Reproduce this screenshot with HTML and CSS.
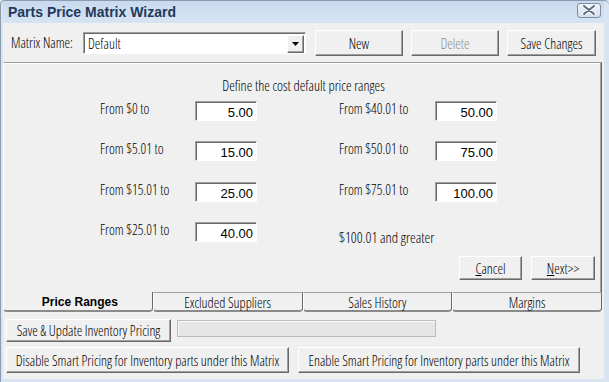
FILE: index.html
```
<!DOCTYPE html>
<html>
<head>
    <link rel="stylesheet" href="styles.css">
</head>
<body>
<div class="window">
    <div class="titlebar">
        <span class="title">Parts Price Matrix Wizard</span>
        <span class="close">
            <svg width="14" height="10" viewBox="0 0 14 10">
                <path d="M2 1 L12 9 M12 1 L2 9" stroke="#fff" stroke-width="4" stroke-linecap="round"/>
                <path d="M2 1 L12 9 M12 1 L2 9" stroke="#5c6a7c" stroke-width="2" stroke-linecap="round"/>
            </svg>
        </span>
    </div>
    <div class="client">
        <div class="toprow">
            <span class="lbl">Matrix Name:</span>
            <div class="combo">
                <span class="combo-text">Default</span>
                <span class="drop">
                    <svg width="7" height="4" viewBox="0 0 7 4"><path d="M0 0 H7 L3.5 4 Z" fill="#000"/></svg>
                </span>
            </div>
            <button class="btn btn-top">New</button>
            <button class="btn btn-top disabled">Delete</button>
            <button class="btn btn-top btn-save">Save Changes</button>
        </div>

        <div class="panel">
            <div class="heading">Define the cost default price ranges</div>
            <div class="ranges">
                <span class="rlbl">From $0 to</span>
                <span class="field">5.00</span>
                <span></span>
                <span class="rlbl">From $40.01 to</span>
                <span class="field">50.00</span>

                <span class="rlbl">From $5.01 to</span>
                <span class="field">15.00</span>
                <span></span>
                <span class="rlbl">From $50.01 to</span>
                <span class="field">75.00</span>

                <span class="rlbl">From $15.01 to</span>
                <span class="field">25.00</span>
                <span></span>
                <span class="rlbl">From $75.01 to</span>
                <span class="field">100.00</span>

                <span class="rlbl">From $25.01 to</span>
                <span class="field">40.00</span>
                <span></span>
                <span class="rlbl last">$100.01 and greater</span>
                <span></span>
            </div>
            <div class="nav">
                <button class="btn btn-nav btn-cancel"><u>C</u>ancel</button>
                <button class="btn btn-nav"><u>N</u>ext&gt;&gt;</button>
            </div>
        </div>

        <div class="tabs">
            <div class="tab active">Price Ranges</div>
            <div class="tab">Excluded Suppliers</div>
            <div class="tab">Sales History</div>
            <div class="tab">Margins</div>
        </div>

        <div class="bottom">
            <div class="brow">
                <button class="btn btn-upd">Save &amp; Update Inventory Pricing</button>
                <div class="progress"></div>
            </div>
            <div class="brow brow-2">
                <button class="btn btn-smart">Disable Smart Pricing for Inventory parts under this Matrix</button>
                <button class="btn btn-smart btn-enable">Enable Smart Pricing for Inventory parts under this Matrix</button>
            </div>
        </div>
    </div>
</div>
</body>
</html>
```

FILE: styles.css
```
* {
    box-sizing: border-box;
}

body {
    margin: 0;
    background-color: #d8e4f2;
    font-family: "Open Sans", "Liberation Sans", Arial, sans-serif;
    font-stretch: 75%;
    font-weight: 300;
    font-size: 14px;
    color: #000;
    overflow: hidden;
}

.window {
    width: 609px;
    height: 382px;
    background-color: #d8e4f2;
    border-left: 1px solid #8b9bb0;
    border-top: 1px solid #8b9bb0;
    border-radius: 5px 5px 0 0;
    padding: 0 5px 3px 2px;
    display: flex;
    flex-direction: column;
}

.titlebar {
    height: 22px;
    display: flex;
    align-items: center;
    justify-content: space-between;
    padding: 0 3px 0 5px;
    background: linear-gradient(#c9daee, #d6e3f2);
}

.title {
    font-family: "Liberation Sans", Arial, sans-serif;
    font-stretch: normal;
    font-weight: bold;
    font-size: 14px;
    color: #22395a;
}

.close {
    width: 24px;
    height: 15px;
    margin-top: -4px;
    border: 1px solid #7d8ba0;
    border-radius: 3px;
    background: linear-gradient(#eef3f9, #d3deec);
    display: flex;
    align-items: center;
    justify-content: center;
}

.client {
    flex: 1;
    background-color: #f0f0f0;
    display: flex;
    flex-direction: column;
}

.toprow {
    display: flex;
    align-items: center;
    height: 26px;
    margin-top: 7px;
    padding-left: 8px;
}

.lbl {
    width: 72px;
    line-height: 16px;
}

.combo {
    width: 223px;
    height: 22px;
    background: #fff;
    border: 1px solid;
    border-color: #a0a0a0 #fff #fff #a0a0a0;
    box-shadow: inset 1px 1px #696969;
    display: flex;
    align-items: center;
    padding: 2px 1px 1px 4px;
    margin-right: 9px;
    line-height: 16px;
}

.combo-text {
    flex: 1;
}

.drop {
    width: 17px;
    height: 18px;
    background: #f0f0f0;
    border: 1px solid;
    border-color: #fff #696969 #696969 #fff;
    box-shadow: inset -1px -1px #a0a0a0;
    display: flex;
    align-items: center;
    justify-content: center;
}

.btn {
    font-family: inherit;
    font-stretch: 75%;
    font-weight: 300;
    font-size: 14px;
    color: #000;
    background-color: #f0f0f0;
    border: 1px solid;
    border-color: #fff #696969 #696969 #fff;
    box-shadow: inset -1px -1px #a0a0a0;
    padding: 0;
    border-radius: 0;
    white-space: nowrap;
}

.btn-top {
    width: 88px;
    height: 26px;
    margin-right: 8px;
}

.btn-save {
    width: 89px;
}

.disabled {
    color: #8d8d8d;
}

.panel {
    height: 230px;
    border-top: 1px solid #a0a0a0;
    border-left: 1px solid #fff;
    border-right: 1px solid #696969;
    box-shadow: inset -1px 0 #a0a0a0, inset 0 1px #fff;
    margin-top: 6px;
    margin-right: 2px;
    padding-top: 15px;
    display: flex;
    flex-direction: column;
}

.heading {
    text-align: center;
    font-size: 14.2px;
    line-height: 16px;
    padding-left: 2px;
}

.ranges {
    display: grid;
    grid-template-columns: 95px 62px 82px 96px 62px;
    grid-auto-rows: 20px;
    row-gap: 20.4px;
    margin-top: 7px;
    padding-left: 96px;
}

.rlbl {
    line-height: 15px;
    white-space: nowrap;
}

.rlbl.last {
    padding-top: 8px;
    font-size: 14.5px;
}

.field {
    background: #fff;
    border: 1px solid;
    border-color: #a0a0a0 #fff #fff #a0a0a0;
    box-shadow: inset 1px 1px #696969;
    text-align: right;
    padding: 3px 3px 0 0;
    font-family: "Liberation Sans", Arial, sans-serif;
    font-stretch: normal;
    font-weight: normal;
    font-size: 13px;
    line-height: 15px;
}

.nav {
    display: flex;
    justify-content: flex-end;
    gap: 9px;
    margin-top: 14px;
    padding-right: 6px;
}

.btn-nav {
    width: 64px;
    height: 24px;
}

.btn-cancel {
    width: 63px;
}

.tabs {
    display: flex;
    height: 20px;
    margin-right: 2px;
}

.tab {
    width: 150px;
    border-top: 1px solid #a0a0a0;
    border-left: 1px solid #fff;
    border-right: 1px solid #696969;
    border-bottom: 2px solid #8a8a8a;
    border-radius: 0 0 4px 4px;
    text-align: center;
    line-height: 19px;
}

.tab.active {
    border-top: none;
    font-family: "Liberation Sans", Arial, sans-serif;
    font-stretch: normal;
    font-weight: bold;
    font-size: 12px;
    line-height: 20px;
    padding-left: 4px;
}

.bottom {
    padding-left: 3px;
    margin-top: 7px;
}

.brow {
    display: flex;
    align-items: flex-start;
}

.btn-upd {
    width: 165px;
    height: 23px;
}

.progress {
    width: 259px;
    height: 17px;
    margin: 1px 0 0 6px;
    border: 1px solid #bcbcbc;
    background: #e6e6e6;
    box-shadow: inset 1px 1px #f8f8f8;
}

.brow-2 {
    margin-top: 5px;
}

.btn-smart {
    width: 283px;
    height: 26px;
}

.btn-enable {
    width: 282px;
    margin-left: 9px;
}
```
